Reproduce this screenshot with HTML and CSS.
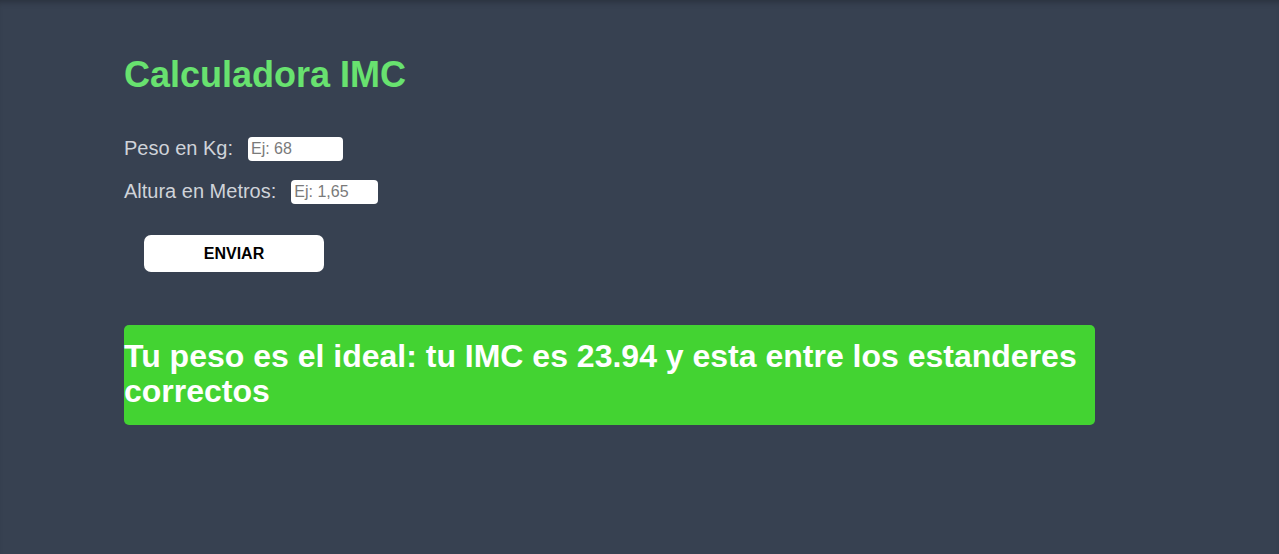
FILE: index.html
```html
<!DOCTYPE html>
<html lang="es">
<head>
<meta charset="utf-8">
<title>Calculadora IMC</title>
<link rel="stylesheet" href="styles.css">
</head>
<body>
<main class="page">
  <h1 class="title">Calculadora IMC</h1>
  <form class="form">
    <div class="row">
      <label class="label" for="peso">Peso en Kg:</label>
      <input class="input input-peso" id="peso" type="text" placeholder="Ej: 68">
    </div>
    <div class="row">
      <label class="label" for="altura">Altura en Metros:</label>
      <input class="input input-altura" id="altura" type="text" placeholder="Ej: 1,65">
    </div>
    <button class="btn" type="button">ENVIAR</button>
  </form>
  <div class="result">
    <h2 class="result-text">Tu peso es el ideal: tu IMC es 23.94 y esta entre los estanderes correctos</h2>
  </div>
</main>
</body>
</html>
```
FILE: styles.css
```css
html, body {
  margin: 0;
  padding: 0;
  height: 100%;
}
body {
  background: #374151;
  font-family: "Liberation Sans", Arial, sans-serif;
  box-shadow: inset 0 6px 6px -4px rgba(0, 0, 0, 0.25);
}
.page {
  padding: 54px 0 0 124px;
  width: 971px;
}
.title {
  margin: 0;
  font-size: 36px;
  font-weight: bold;
  color: #68e26f;
  line-height: 41px;
}
.form {
  margin-top: 42px;
  display: flex;
  flex-direction: column;
  align-items: flex-start;
}
.row {
  display: flex;
  align-items: center;
  gap: 15px;
  height: 24px;
  margin-bottom: 19px;
}
.row:last-of-type {
  margin-bottom: 0;
}
.label {
  font-size: 20px;
  color: #cfd3d9;
  position: relative;
  top: -1px;
}
.input {
  box-sizing: border-box;
  height: 24px;
  border: none;
  border-radius: 4px;
  background: #fff;
  padding: 0 3px;
  font-family: "Liberation Sans", Arial, sans-serif;
  font-size: 16px;
  color: #333;
  outline: none;
}
.input::placeholder {
  color: #7a7a7a;
}
.input-peso {
  width: 95px;
}
.input-altura {
  width: 87px;
}
.btn {
  margin-top: 31px;
  margin-left: 20px;
  width: 180px;
  height: 37px;
  border: none;
  border-radius: 7px;
  background: #fff;
  color: #000;
  font-family: "Liberation Sans", Arial, sans-serif;
  font-size: 16px;
  font-weight: bold;
  cursor: pointer;
}
.result {
  margin-top: 53px;
  background: #43d332;
  border-radius: 5px;
  padding: 14px 0 16px;
}
.result-text {
  margin: 0;
  font-size: 32px;
  font-weight: bold;
  color: #fff;
  line-height: 35px;
}
```
